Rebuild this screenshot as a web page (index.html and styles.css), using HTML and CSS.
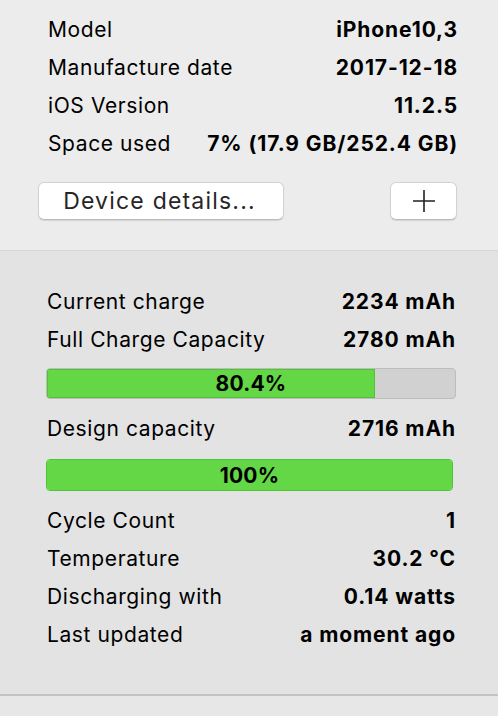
FILE: index.html
```html
<!DOCTYPE html>
<html>
<head>
<meta charset="utf-8">
<link rel="stylesheet" href="styles.css">
</head>
<body>
<section class="device">
  <div class="row"><span class="label">Model</span><span class="value">iPhone10,3</span></div>
  <div class="row"><span class="label">Manufacture date</span><span class="value">2017-12-18</span></div>
  <div class="row"><span class="label">iOS Version</span><span class="value">11.2.5</span></div>
  <div class="row"><span class="label">Space used</span><span class="value">7% (17.9 GB/252.4 GB)</span></div>
  <div class="buttons">
    <button class="btn btn-details">Device details...</button>
    <button class="btn btn-plus" aria-label="Add">
      <svg width="22" height="22" viewBox="0 0 22 22"><path d="M11 0V22M0 11H22" stroke="#222" stroke-width="1.6" fill="none"/></svg>
    </button>
  </div>
</section>
<section class="battery">
  <div class="row"><span class="label">Current charge</span><span class="value">2234 mAh</span></div>
  <div class="row"><span class="label">Full Charge Capacity</span><span class="value">2780 mAh</span></div>
  <div class="bar bar-full"><div class="fill" style="width:80.4%"></div><span class="bar-text">80.4%</span></div>
  <div class="row row-design"><span class="label">Design capacity</span><span class="value">2716 mAh</span></div>
  <div class="bar bar-design"><div class="fill" style="width:100%"></div><span class="bar-text">100%</span></div>
  <div class="row row-cycle"><span class="label">Cycle Count</span><span class="value">1</span></div>
  <div class="row"><span class="label">Temperature</span><span class="value">30.2 °C</span></div>
  <div class="row"><span class="label">Discharging with</span><span class="value">0.14 watts</span></div>
  <div class="row"><span class="label">Last updated</span><span class="value">a moment ago</span></div>
</section>
<footer class="bottom"></footer>
</body>
</html>
```
FILE: styles.css
```css
html, body {
  margin: 0;
  padding: 0;
}
body {
  width: 498px;
  height: 716px;
  overflow: hidden;
  background: #e7e7e7;
  font-family: Inter, "Open Sans", sans-serif;
  color: #000;
  font-size: 21px;
}
.device {
  background: #ececec;
  height: 239px;
  padding: 11px 41px 0 48px;
  border-bottom: 1px solid #d6d6d6;
}
.row {
  display: flex;
  justify-content: space-between;
  align-items: center;
  height: 38px;
  line-height: 38px;
  white-space: nowrap;
}
.label {
  font-weight: 400;
  letter-spacing: 0.6px;
}
.value {
  font-weight: 700;
  letter-spacing: 0.9px;
  margin-right: -1px;
}
.buttons {
  display: flex;
  justify-content: space-between;
  margin: 19px 0 0 -10px;
}
.btn {
  height: 38px;
  background: #fff;
  border: 1px solid #d2d2d2;
  border-bottom-color: #bcbcbc;
  border-radius: 6px;
  box-shadow: 0 1px 1px rgba(0,0,0,0.10);
  font-family: inherit;
  color: #262626;
  padding: 0;
  display: flex;
  align-items: center;
  justify-content: center;
}
.btn-details {
  width: 246px;
  font-size: 23px;
  letter-spacing: 1.2px;
  padding-right: 3px;
}
.btn-plus {
  width: 67px;
}
.battery {
  background: #e3e3e3;
  height: 411px;
  padding: 32px 43px 0 47px;
  border-bottom: 2px solid #c4c4c4;
}
.bar {
  position: relative;
  height: 29px;
  margin: 9px -1px 0 -1px;
  border: 1px solid #bdbdbd;
  border-radius: 4px;
  background: #d1d1d1;
  overflow: hidden;
}
.fill {
  height: 100%;
  background: #63d745;
  box-shadow: inset 0 0 0 1px #4fc437;
}
.bar-design {
  height: 30px;
  margin-top: 11px;
  margin-right: 2px;
  border-color: #4fc437;
}
.bar-design .fill {
  box-shadow: none;
}
.bar-text {
  position: absolute;
  inset: 0;
  display: flex;
  align-items: center;
  justify-content: center;
  font-weight: 700;
  font-size: 21px;
  letter-spacing: 0.2px;
}
.row-design {
  margin-top: 11px;
}
.row-cycle {
  margin-top: 11px;
}
.bottom {
  height: 20px;
}
```
